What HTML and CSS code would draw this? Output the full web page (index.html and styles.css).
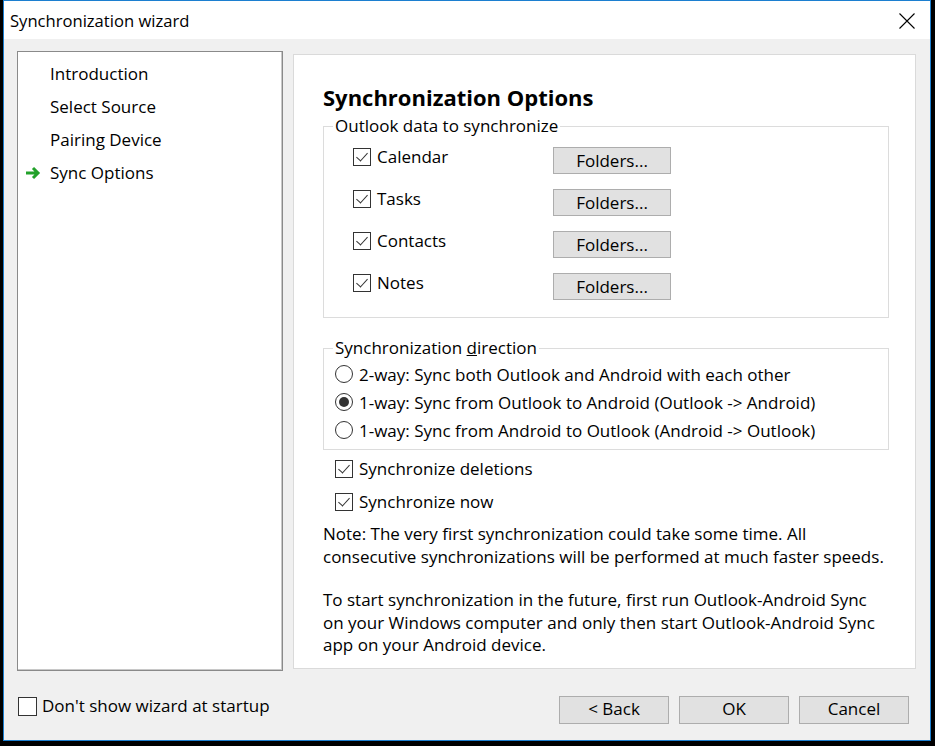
FILE: index.html
```html
<!DOCTYPE html>
<html>
<head>
<meta charset="utf-8">
<link rel="stylesheet" href="styles.css">
</head>
<body>
<div class="window">
  <div class="titlebar">
    <span class="title">Synchronization wizard</span>
    <svg class="close" width="16" height="16" viewBox="0 0 16 16"><path d="M0.5 0.5 L15.5 15.5 M15.5 0.5 L0.5 15.5" stroke="#000" stroke-width="1.1" fill="none"/></svg>
  </div>
  <div class="client">
    <div class="panels">
      <ul class="nav">
        <li>Introduction</li>
        <li>Select Source</li>
        <li>Pairing Device</li>
        <li class="current"><svg class="arrow" width="16" height="14" viewBox="0 0 16 14"><path d="M1 7 H13 M8 2 L13 7 L8 12" stroke="#22a12a" stroke-width="3" fill="none" stroke-linejoin="miter"/></svg>Sync Options</li>
      </ul>
      <div class="page">
        <h1 class="heading">Synchronization Options</h1>
        <fieldset class="group">
          <legend>Outlook data to synchronize</legend>
          <div class="data">
            <div class="datarow"><label class="chk"><span class="box checked"></span>Calendar</label><button class="btn folders">Folders...</button></div>
            <div class="datarow"><label class="chk"><span class="box checked"></span>Tasks</label><button class="btn folders">Folders...</button></div>
            <div class="datarow"><label class="chk"><span class="box checked"></span>Contacts</label><button class="btn folders">Folders...</button></div>
            <div class="datarow"><label class="chk"><span class="box checked"></span>Notes</label><button class="btn folders">Folders...</button></div>
          </div>
        </fieldset>
        <fieldset class="group direction">
          <legend>Synchronization <u>d</u>irection</legend>
          <div class="radios">
            <label class="radio"><span class="dot"></span>2-way: Sync both Outlook and Android with each other</label>
            <label class="radio"><span class="dot on"></span>1-way: Sync from Outlook to Android (Outlook -&gt; Android)</label>
            <label class="radio"><span class="dot"></span>1-way: Sync from Android to Outlook (Android -&gt; Outlook)</label>
          </div>
        </fieldset>
        <div class="options">
          <label class="chk opt"><span class="box checked"></span>Synchronize deletions</label>
          <label class="chk opt"><span class="box checked"></span>Synchronize now</label>
        </div>
        <p class="note">Note: The very first synchronization could take some time. All<br>consecutive synchronizations will be performed at much faster speeds.</p>
        <p class="note">To start synchronization in the future, first run Outlook-Android Sync<br>on your Windows computer and only then start Outlook-Android Sync<br>app on your Android device.</p>
      </div>
    </div>
    <div class="footer">
      <label class="chk startup"><span class="box"></span>Don't show wizard at startup</label>
      <div class="buttons">
        <button class="btn wide">&lt; Back</button>
        <button class="btn wide">OK</button>
        <button class="btn wide">Cancel</button>
      </div>
    </div>
  </div>
</div>
</body>
</html>
```
FILE: styles.css
```css
* { box-sizing: border-box; }
html, body { margin: 0; padding: 0; }
body {
  background: #000;
  width: 935px;
  height: 746px;
  overflow: hidden;
  font-family: "Open Sans", "Noto Sans", sans-serif;
  font-size: 17px;
  color: #000;
}
.window {
  margin-left: 3px;
  width: 928px;
  height: 741px;
  border: 1px solid #1c7fd0;
  background: #f0f0f0;
  display: flex;
  flex-direction: column;
}
.titlebar {
  height: 38px;
  background: #fff;
  display: flex;
  align-items: center;
  justify-content: space-between;
  padding: 0 15px 0 6px;
}
.title { font-size: 16.6px; }
.close { display: block; margin-top: 1px; }
.client {
  flex: 1;
  display: flex;
  flex-direction: column;
  padding: 12px 13px 0 13px;
}
.panels { display: flex; align-items: flex-start; }
.nav {
  list-style: none;
  margin: 0;
  padding: 5px 0 0 32px;
  width: 266px;
  height: 620px;
  background: #fff;
  border: 1px solid #8a8a8a;
  box-shadow: inset -1px -1px 0 #c8c8c8;
}
.nav li {
  height: 33px;
  line-height: 33px;
  position: relative;
}
.nav .arrow {
  position: absolute;
  left: -25px;
  top: 10px;
}
.page {
  margin-left: 10px;
  margin-top: 3px;
  width: 623px;
  height: 615px;
  background: #fff;
  border: 1px solid #dadada;
  padding: 28px 26px 0 29px;
  white-space: nowrap;
}
.heading {
  margin: 0;
  font-size: 22px;
  font-weight: 700;
  line-height: 28px;
}
.group {
  margin: 5px 0 0 0;
  border: 1px solid #dcdcdc;
  padding: 0;
  min-width: 0;
}
.group legend {
  padding: 0 2px;
  margin-left: 9px;
  line-height: 20px;
}
.data { padding: 11px 0 18px 29px; }
.datarow {
  display: flex;
  align-items: flex-start;
  height: 26px;
  margin-bottom: 16px;
}
.datarow:last-child { margin-bottom: 0; }
.datarow .chk { width: 200px; margin-top: 1px; }
.chk {
  display: flex;
  align-items: center;
  height: 18px;
  line-height: 18px;
}
.box {
  width: 18px;
  height: 18px;
  border: 1px solid #333;
  background: #fff;
  margin-right: 6px;
  flex: none;
  position: relative;
}
.box.checked::after {
  content: "";
  position: absolute;
  left: 5px;
  top: 1px;
  width: 5px;
  height: 10px;
  border-right: 1.3px solid #333;
  border-bottom: 1.3px solid #333;
  transform: rotate(42deg);
}
.btn {
  font: inherit;
  color: #000;
  background: #e1e1e1;
  border: 1px solid #adadad;
  padding: 0;
  line-height: 1;
}
.folders { width: 118px; height: 27px; padding-bottom: 1px; }
.direction { margin-top: 20px; }
.radios { padding: 2px 0 5px 11px; }
.radio {
  display: flex;
  align-items: center;
  height: 28px;
}
.dot {
  width: 18px;
  height: 18px;
  border: 1px solid #333;
  border-radius: 50%;
  margin-right: 6px;
  background: #fff;
  position: relative;
  flex: none;
}
.dot.on::after {
  content: "";
  position: absolute;
  left: 3px;
  top: 3px;
  width: 10px;
  height: 10px;
  border-radius: 50%;
  background: #333;
}
.options { padding: 5px 0 0 12px; }
.opt { height: 28px; margin-bottom: 5px; }
.opt:last-child { margin-bottom: 0; }
.note {
  margin: 7px 0 0 0;
  line-height: 22.5px;
}
.note + .note { margin-top: 21px; }
.footer {
  display: flex;
  align-items: center;
  justify-content: space-between;
  margin-top: 25px;
  padding-left: 1px;
  padding-right: 8px;
}
.startup { position: relative; top: -4px; }
.startup .box { width: 19px; height: 19px; margin-right: 5px; }
.buttons { display: flex; gap: 10px; }
.wide { width: 110px; height: 28px; padding-bottom: 3px; }
```
